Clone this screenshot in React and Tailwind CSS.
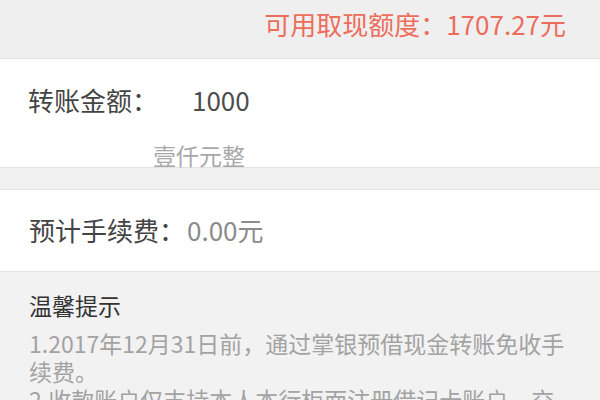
export default function App() {
  return (
    <div
      className="w-[600px] h-[400px] overflow-hidden bg-[#f2f2f2]"
      style={{ fontFamily: '"Noto Sans CJK SC", "Noto Sans", sans-serif' }}
    >
      <div className="h-[59px] bg-[#efefef] border-b border-[#e3e3e3] flex justify-end pt-[9px] pr-[34px]">
        <span className="text-[26px] leading-[30px] text-[#ec6d5c]">
          可用取现额度：1707.27元
        </span>
      </div>

      <div className="h-[109px] bg-white border-b border-[#e3e3e3] pl-[28px] pt-[26px]">
        <div className="flex text-[26px] leading-[30px] text-[#444444]">
          <span className="w-[164px]">转账金额：</span>
          <span className="text-[#4d4d4d]">1000</span>
        </div>
        <div className="mt-[27px] ml-[125px] text-[23px] leading-[26px] text-[#a8a8a8]">
          壹仟元整
        </div>
      </div>

      <div className="h-[22px] bg-[#f0f0f0] border-b border-[#e3e3e3]" />

      <div className="h-[82px] bg-white border-b border-[#e3e3e3] pl-[29px] pt-[25px]">
        <div className="flex text-[26px] leading-[30px] text-[#444444]">
          <span>预计手续费：</span>
          <span className="ml-[2px] text-[#8c8c8c]">0.00元</span>
        </div>
      </div>

      <div className="px-[29px] pt-[19px]">
        <div className="text-[23px] leading-[28px] text-[#333333]">温馨提示</div>
        <div className="mt-[10px] text-[23px] leading-[28px] text-[#a3a3a3]">
          1.2017年12月31日前，通过掌银预借现金转账免收手续费。
          <br />
          2.收款账户仅支持本人本行柜面注册借记卡账户，交易金额以实际到账为准。
        </div>
      </div>
    </div>
  );
}
